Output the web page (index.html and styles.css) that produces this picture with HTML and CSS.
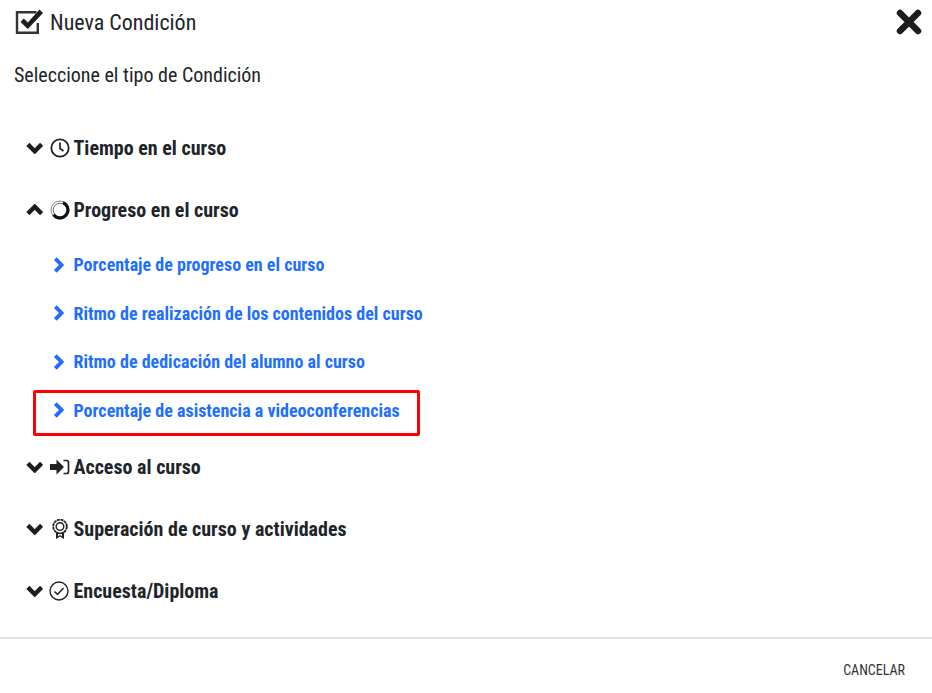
FILE: index.html
```html
<!DOCTYPE html>
<html lang="es">
<head>
<meta charset="utf-8">
<title>Nueva Condición</title>
<link rel="stylesheet" href="styles.css">
</head>
<body>
<div class="dialog">
  <header class="head">
    <div class="title">
      <svg class="title-icon" viewBox="0 0 28 26" width="28" height="26"><path d="M21.500 3.200H2V23.800H22.800V14" fill="none" stroke="#333" stroke-width="2.400"/><path d="M5.500 13l3.300-3.400 4 4L24.500.5 28 4 12.800 20z" fill="#1e1e1e"/></svg>
      <span>Nueva Condición</span>
    </div>
    <svg class="close" viewBox="0 0 26 26" width="26" height="26"><path d="M4 4l18 18M22 4L4 22" stroke="#1c1c1e" stroke-width="6.500" stroke-linecap="round"/></svg>
  </header>
  <p class="lead">Seleccione el tipo de Condición</p>
  <ul class="tree">
    <li class="group">
      <svg class="chev" viewBox="0 0 16 11"><path d="M1.700 2.200l6.300 6.300 6.300-6.300" fill="none" stroke="#1c1c1e" stroke-width="4"/></svg>
      <svg class="gi" viewBox="0 0 20 20" width="20" height="20"><circle cx="10" cy="10" r="8.700" fill="none" stroke="#222" stroke-width="1.800"/><path d="M10 4.500v6l3.500 2.500" fill="none" stroke="#222" stroke-width="1.700"/></svg>
      <span>Tiempo en el curso</span>
    </li>
    <li class="group">
      <svg class="chev" viewBox="0 0 16 11"><path d="M1.700 8.800l6.300-6.300 6.300 6.300" fill="none" stroke="#1c1c1e" stroke-width="4"/></svg>
      <svg class="gi" viewBox="0 0 20 20" width="20" height="20"><circle cx="10" cy="10" r="9" fill="none" stroke="#888" stroke-width="1"/><circle cx="10" cy="10" r="6.800" fill="none" stroke="#666" stroke-width="1"/><path d="M13 2.600A8 8 0 1 1 3.500 14.700" fill="none" stroke="#111" stroke-width="3"/></svg>
      <span>Progreso en el curso</span>
    </li>
    <li class="sub first"><svg class="chev-r" viewBox="0 0 11 16" width="11" height="16"><path d="M2.300 1.600l6.300 6.400-6.300 6.400" fill="none" stroke="#1f6fff" stroke-width="3.900"/></svg><span>Porcentaje de progreso en el curso</span></li>
    <li class="sub"><svg class="chev-r" viewBox="0 0 11 16" width="11" height="16"><path d="M2.300 1.600l6.300 6.400-6.300 6.400" fill="none" stroke="#1f6fff" stroke-width="3.900"/></svg><span>Ritmo de realización de los contenidos del curso</span></li>
    <li class="sub"><svg class="chev-r" viewBox="0 0 11 16" width="11" height="16"><path d="M2.300 1.600l6.300 6.400-6.300 6.400" fill="none" stroke="#1f6fff" stroke-width="3.900"/></svg><span>Ritmo de dedicación del alumno al curso</span></li>
    <li class="sub marked"><svg class="chev-r" viewBox="0 0 11 16" width="11" height="16"><path d="M2.300 1.600l6.300 6.400-6.300 6.400" fill="none" stroke="#1f6fff" stroke-width="3.900"/></svg><span>Porcentaje de asistencia a videoconferencias</span></li>
    <li class="group after">
      <svg class="chev" viewBox="0 0 16 11"><path d="M1.700 2.200l6.300 6.300 6.300-6.300" fill="none" stroke="#1c1c1e" stroke-width="4"/></svg>
      <svg class="gi" viewBox="0 0 20 20" width="20" height="20"><path d="M0 7h6.500V2.500l7.500 7.500-7.500 7.500V13H0z" fill="#222"/><path d="M13.500 3.500h3a2 2 0 0 1 2 2v9a2 2 0 0 1-2 2h-3" fill="none" stroke="#222" stroke-width="1.700"/></svg>
      <span>Acceso al curso</span>
    </li>
    <li class="group">
      <svg class="chev" viewBox="0 0 16 11"><path d="M1.700 2.200l6.300 6.300 6.300-6.300" fill="none" stroke="#1c1c1e" stroke-width="4"/></svg>
      <svg class="gi" viewBox="0 0 20 20" width="20" height="20"><path d="M6 12v8l4-2.500 4 2.500v-8z" fill="#222"/><path d="M8 15v2.200l2-1.200 2 1.200V15z" fill="#fff"/><circle cx="10" cy="7.500" r="6.800" fill="#fff" stroke="#222" stroke-width="1.800" stroke-dasharray="3 .6"/><circle cx="10" cy="7.500" r="3.800" fill="none" stroke="#222" stroke-width="1.400"/></svg>
      <span>Superación de curso y actividades</span>
    </li>
    <li class="group">
      <svg class="chev" viewBox="0 0 16 11"><path d="M1.700 2.200l6.300 6.300 6.300-6.300" fill="none" stroke="#1c1c1e" stroke-width="4"/></svg>
      <svg class="gi wide" viewBox="0 0 20 20" width="20" height="20"><circle cx="10" cy="10" r="9" fill="none" stroke="#222" stroke-width="1.400"/><path d="M5.500 10.500l3 3 6-6.500" fill="none" stroke="#222" stroke-width="1.500"/></svg>
      <span>Encuesta/Diploma</span>
    </li>
  </ul>
  <footer class="foot"><span class="cancel">CANCELAR</span></footer>
</div>
</body>
</html>
```
FILE: styles.css
```css
* { box-sizing: border-box; }
html, body { margin: 0; padding: 0; background: #fff; }
body { font-family: "Roboto", "Liberation Sans", sans-serif; font-stretch: 75%; color: #212529; overflow: hidden; }
.dialog { width: 932px; height: 693px; display: flex; flex-direction: column; }
.head { display: flex; justify-content: space-between; align-items: center; padding: 0 10px 0 15px; height: 44px; }
.title { display: flex; align-items: center; gap: 7px; font-size: 22px; }
.lead { margin: 17px 0 0 14px; font-size: 20px; line-height: 28px; }
.tree { list-style: none; margin: 0; padding: 28px 0 0; flex: 1; }
.group, .sub { display: flex; align-items: center; font-weight: 700; }
.group { height: 62px; padding-left: 26px; font-size: 20px; }
.chev { width: 17.500px; height: 12px; margin: 0 7px 0 -.500px; }
.gi { margin-right: 3.500px; }
.wide { margin-left: -1px; margin-right: 4.500px; }
.sub { height: 48.500px; padding-left: 53px; color: #1f6fff; font-size: 18px; }
.first { margin-top: -0.500px; }
.after { margin-top: 1.500px; }
.chev-r { margin-right: 9.500px; }
.marked { position: relative; }
.marked::after { content: ""; position: absolute; left: 33px; top: 4px; width: 381px; height: 40px; border: 3px solid #f00; border-radius: 2px; }
.foot { height: 56px; border-top: 2px solid #dde3e6; display: flex; justify-content: flex-end; align-items: center; padding: 7px 27px 0 0; }
.cancel { font-size: 14px; color: #333; }
```
